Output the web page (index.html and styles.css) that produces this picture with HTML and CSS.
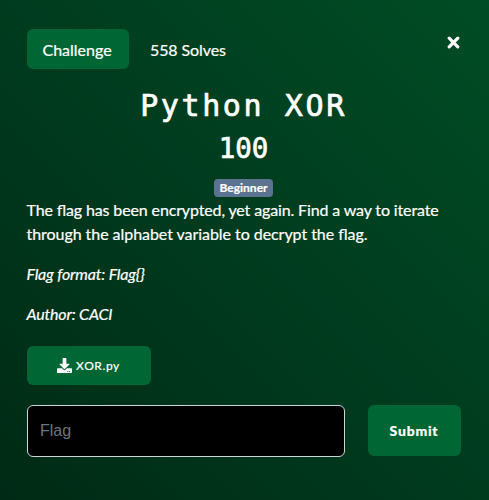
FILE: index.html
```html
<!DOCTYPE html>
<html lang="en">
<head>
<meta charset="utf-8">
<title>Python XOR</title>
<link rel="stylesheet" href="styles.css">
</head>
<body>
<main class="modal">
  <header class="top">
    <span class="tab">Challenge</span>
    <span class="solves">558 Solves</span>
    <button class="close" aria-label="Close"><svg width="13" height="13" viewBox="0 0 13 13"><path d="M2.2 2.2 10.8 10.8M10.8 2.2 2.2 10.8"/></svg></button>
  </header>
  <h2 class="name">Python XOR</h2>
  <h3 class="points">100</h3>
  <div class="tags"><span class="tag">Beginner</span></div>
  <div class="desc">
    <p><span class="lead">The flag has been encrypted, yet again. Find a way to iterate</span> through the alphabet variable to decrypt the flag.</p>
    <p><em>Flag format: Flag{}</em></p>
    <p><em>Author: CACI</em></p>
  </div>
  <a class="file"><svg width="15" height="15" viewBox="0 0 512 512"><path d="M216 0h80c13 0 24 11 24 24v168h88c18 0 27 21 14 34L270 378c-8 8-20 8-28 0L90 226c-13-13-4-34 14-34h88V24c0-13 11-24 24-24zm296 376v112c0 13-11 24-24 24H24c-13 0-24-11-24-24V376c0-13 11-24 24-24h147l49 49c20 20 52 20 72 0l49-49h147c13 0 24 11 24 24zM388 464a20 20 0 1 0-40 0 20 20 0 0 0 40 0zm64 0a20 20 0 1 0-40 0 20 20 0 0 0 40 0z"/></svg><span>XOR.py</span></a>
  <form class="answer">
    <input class="flag" type="text" placeholder="Flag">
    <button class="submit" type="button">Submit</button>
  </form>
</main>
</body>
</html>
```

FILE: styles.css
```css
* { box-sizing: border-box; }
body { margin: 0; }
.modal {
  height: 500px;
  padding: 29px 28px 0 27px;
  overflow: hidden;
  background: linear-gradient(45deg, #002a15, #003c1f 52%, #004c24);
  color: #fff;
  font: 16px/24px Lato, sans-serif;
  font-feature-settings: "liga" 1;
  -webkit-text-stroke: 0.2px;
}
.top { display: flex; height: 40px; }
.tab {
  width: 102px;
  padding-left: 15.5px;
  border-radius: 6px;
  background: #006633;
  line-height: 41px;
}
.solves { margin-left: 21px; line-height: 42px; letter-spacing: -0.1px; }
.close {
  width: 13px;
  height: 13px;
  margin: 7px 1px 0 auto;
  padding: 0;
  border: 0;
  background: none;
}
.close svg { display: block; fill: none; stroke: #fff; stroke-width: 3.2; stroke-linecap: round; }
.name, .points {
  margin: 0;
  font-family: "DejaVu Sans Mono", monospace;
  font-weight: 400;
  text-align: center;
  -webkit-text-stroke: 0.7px;
}
.name { margin: 18px 1px 0 0; font-size: 30px; line-height: 38px; letter-spacing: 2.6px; }
.points { margin: 7px 1px 0 0; font-size: 27.5px; line-height: 33px; padding-bottom: 1px; }
.tags { display: flex; height: 18px; margin: 13px 0 0 187px; }
.tag {
  width: 59px;
  border-radius: 4px;
  background: #5b7290;
  font-size: 12px;
  font-weight: 700;
  line-height: 18px;
  text-align: center;
}
.desc { margin: 1px 0 0 -0.5px; letter-spacing: -0.05px; }
.desc p { margin: 0 0 16px; }
.desc em { letter-spacing: -0.17px; }
.lead { letter-spacing: -0.135px; }
.file {
  display: flex;
  align-items: center;
  justify-content: center;
  gap: 4px;
  width: 124px;
  height: 39px;
  margin-top: 20px;
  padding-right: 1px;
  border-radius: 6px;
  background: #006633;
  font-size: 12px;
  letter-spacing: 0.6px;
}
.file svg { fill: #fff; }
.answer { display: flex; gap: 23px; margin-top: 20px; }
.flag {
  width: 318px;
  height: 52px;
  padding: 0 13px 0 12px;
  border: 1px solid #ced4da;
  border-radius: 6px;
  background: #000;
  color: #fff;
  font: 16px "Liberation Sans", sans-serif;
  -webkit-text-stroke: 0;
}
.flag::placeholder { color: #6c757d; opacity: 1; }
.submit {
  width: 93px;
  height: 51px;
  padding: 0 1px 0 0;
  border: 0;
  border-radius: 6px;
  background: #006633;
  color: #fff;
  font: 900 14px Lato, sans-serif;
  letter-spacing: 0.75px;
}
```
